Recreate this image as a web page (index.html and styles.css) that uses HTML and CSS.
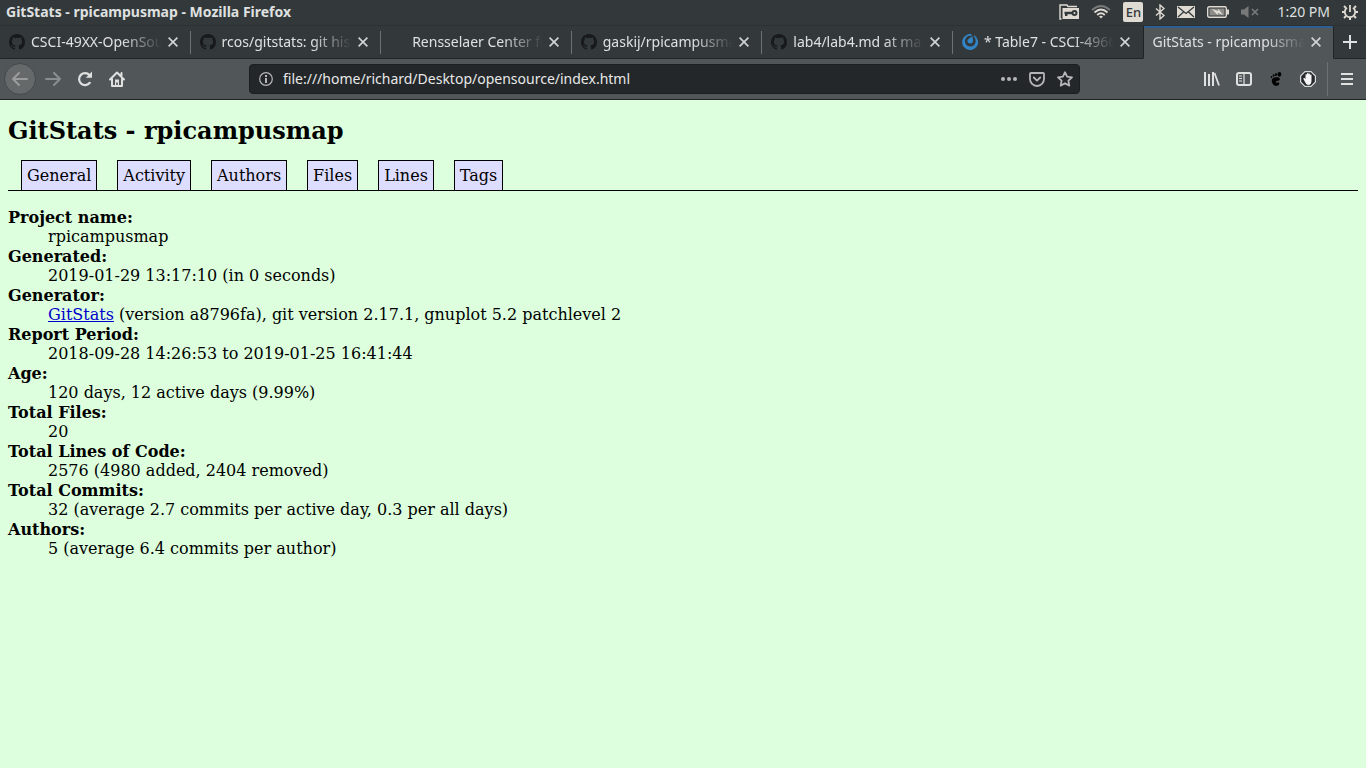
FILE: index.html
```html
<!DOCTYPE html>
<html lang="en">
<head>
<meta charset="utf-8">
<title>GitStats - rpicampusmap</title>
<link rel="stylesheet" href="styles.css">
</head>
<body>
<svg class="defs" aria-hidden="true">
  <symbol id="octocat" viewBox="0 0 16 16"><path fill="currentColor" d="M8 0C3.58 0 0 3.58 0 8c0 3.54 2.29 6.53 5.47 7.59.4.07.55-.17.55-.38 0-.19-.01-.82-.01-1.49-2.01.37-2.53-.49-2.69-.94-.09-.23-.48-.94-.82-1.13-.28-.15-.68-.52-.01-.53.63-.01 1.08.58 1.23.82.72 1.21 1.87.87 2.33.66.07-.52.28-.87.51-1.07-1.78-.2-3.64-.89-3.64-3.95 0-.87.31-1.59.82-2.15-.08-.2-.36-1.02.08-2.12 0 0 .67-.21 2.2.82.64-.18 1.32-.27 2-.27s1.36.09 2 .27c1.53-1.04 2.2-.82 2.2-.82.44 1.1.16 1.92.08 2.12.51.56.82 1.27.82 2.15 0 3.07-1.87 3.75-3.65 3.95.29.25.54.73.54 1.48 0 1.07-.01 1.93-.01 2.2 0 .21.15.46.55.38A8.01 8.01 0 0 0 16 8c0-4.42-3.58-8-8-8z"/></symbol>
  <symbol id="cross" viewBox="0 0 10 10"><path fill="none" stroke="currentColor" stroke-width="1.6" d="M.6.6l8.8 8.8M9.4.6L.6 9.4"/></symbol>
</svg>

<header class="browser">
  <div class="titlebar">
    <span class="window-title">GitStats - rpicampusmap - Mozilla Firefox</span>
    <div class="indicators">
      <svg width="20" height="16" viewBox="0 0 20 16"><path fill="none" stroke="#dfdbd2" stroke-width="1.4" d="M2.5 15H1V1h7l1 1.500h9"/><path fill="#dfdbd2" d="M3.500 4H20v11H3.500z"/><path fill="none" stroke="#33383a" stroke-width="2.400" d="M5.500 9h8M7.200 9v3"/><circle cx="15.500" cy="9" r="2" fill="none" stroke="#33383a" stroke-width="2"/></svg>
      <svg width="20" height="14" viewBox="0 0 20 14"><g fill="none" stroke-width="1.800"><path stroke="#777a79" d="M1 5q9-8 18 0"/><path stroke="#dfdbd2" d="M3.500 7.500q6.500-6 13 0M6.200 10q3.800-3.500 7.600 0"/></g><path fill="#dfdbd2" d="M8 11.500q2-1.500 4 0l-2 2z"/></svg>
      <span class="keyboard">En</span>
      <svg width="10" height="16" viewBox="0 0 10 16"><path fill="none" stroke="#dfdbd2" stroke-width="1.400" d="M1 4.500l8 7L5 15V1l4 3.500-8 7"/></svg>
      <svg width="18" height="12" viewBox="0 0 18 12"><path fill="#dfdbd2" d="M0 0h18v12H0z"/><path fill="none" stroke="#33383a" stroke-width="1.300" d="M1 1l8 6.500L17 1M1 11l5.500-5M17 11l-5.500-5"/></svg>
      <svg width="22" height="12" viewBox="0 0 22 12"><rect x=".7" y=".7" width="18.600" height="10.600" rx="1.500" fill="none" stroke="#dfdbd2" stroke-width="1.400"/><path fill="#8d8c88" d="M2.500 2.500h15v7h-15z"/><path fill="#dfdbd2" d="M20 3.500h2v5h-2zM5 3l6 2 .5-2L16 9l-5-2-.5 2z"/></svg>
      <svg width="18" height="12" viewBox="0 0 18 12"><path fill="#777a79" d="M0 3.500h3L7.500 0v12L3 8.500H0z"/><path stroke="#777a79" stroke-width="1.700" d="M11 3l6 6M17 3l-6 6"/></svg>
      <time class="clock">1:20 PM</time>
      <svg width="16" height="16" viewBox="0 0 16 16"><g fill="none" stroke="#dfdbd2"><path stroke-width="1.800" d="M5 3.800a5.200 5.200 0 1 0 6 0M8 1v7"/><path stroke-width="2" d="M3.700 3.700L2 2M12.300 3.700L14 2M2.800 8H0M13.200 8H16M4 12l-2 2M12 12l2 2M8 13.200V16"/></g></svg>
    </div>
  </div>

  <nav class="tabstrip" aria-label="Browser tabs">
    <div class="tab"><svg class="favicon"><use href="#octocat"/></svg><span class="tab-label">CSCI-49XX-OpenSource</span><button class="close" aria-label="Close tab"><svg><use href="#cross"/></svg></button></div>
    <div class="tab"><svg class="favicon"><use href="#octocat"/></svg><span class="tab-label">rcos/gitstats: git history</span><button class="close" aria-label="Close tab"><svg><use href="#cross"/></svg></button></div>
    <div class="tab"><span class="favicon"></span><span class="tab-label">Rensselaer Center for</span><button class="close" aria-label="Close tab"><svg><use href="#cross"/></svg></button></div>
    <div class="tab"><svg class="favicon"><use href="#octocat"/></svg><span class="tab-label">gaskij/rpicampusmap</span><button class="close" aria-label="Close tab"><svg><use href="#cross"/></svg></button></div>
    <div class="tab"><svg class="favicon"><use href="#octocat"/></svg><span class="tab-label">lab4/lab4.md at master</span><button class="close" aria-label="Close tab"><svg><use href="#cross"/></svg></button></div>
    <div class="tab"><svg class="favicon" viewBox="0 0 16 16"><path fill="#3284c6" fill-rule="evenodd" d="M9.500 0l-.2 2A5.200 5.200 0 0 0 3 8a5.400 5.400 0 0 0 10.500.5C14 6 13.300 4 12 2.500l-.1-1.500A8 8 0 1 1 5 .7 8 8 0 0 1 9.500 0zM10.300 2c.5 2.500 1 4.200.6 5.700A2.900 2.900 0 0 1 5.300 7c.2-1.500 2.500-3 5-5z"/></svg><span class="tab-label">* Table7 - CSCI-4966</span><button class="close" aria-label="Close tab"><svg><use href="#cross"/></svg></button></div>
    <div class="tab active"><span class="tab-label">GitStats - rpicampusmap</span><button class="close" aria-label="Close tab"><svg><use href="#cross"/></svg></button></div>
    <button class="new-tab" aria-label="New tab"><svg width="14" height="14" viewBox="0 0 14 14"><path stroke="currentColor" stroke-width="2" d="M7 0v14M0 7h14"/></svg></button>
  </nav>

  <div class="toolbar">
    <div class="nav-buttons">
      <button class="back" aria-label="Back"><svg width="16" height="14" viewBox="0 0 16 14"><path fill="none" stroke="currentColor" stroke-width="2" stroke-linecap="round" stroke-linejoin="round" d="M15 7H1M7 1L1 7l6 6"/></svg></button>
      <button class="forward" aria-label="Forward"><svg width="16" height="14" viewBox="0 0 16 14"><path fill="none" stroke="currentColor" stroke-width="2" stroke-linecap="round" stroke-linejoin="round" d="M1 7h14M9 1l6 6-6 6"/></svg></button>
      <button aria-label="Reload"><svg width="16" height="16" viewBox="0 0 16 16"><path fill="none" stroke="currentColor" stroke-width="2.200" stroke-linecap="round" d="M12.800 11.800A6 6 0 1 1 12.500 4"/><path fill="currentColor" d="M15 .5v6.200H8.800z"/></svg></button>
      <button aria-label="Home"><svg width="16" height="16" viewBox="0 0 16 16"><path fill="none" stroke="currentColor" stroke-width="2" stroke-linecap="round" stroke-linejoin="round" d="M1 8.500l7-7 7 7M3 8v7h10V8M12.500 2v2.500"/><path fill="currentColor" d="M6 8.500h4V15H8.800v-3.500H7.200V15H6z"/></svg></button>
    </div>
    <div class="urlbar">
      <svg width="14" height="14" viewBox="0 0 14 14"><circle cx="7" cy="7" r="6.300" fill="none" stroke="currentColor" stroke-width="1.200"/><path fill="currentColor" d="M6 3h2v2H6zM6 6h2v5H6z"/></svg>
      <input class="url" type="text" aria-label="Address" value="file:///home/richard/Desktop/opensource/index.html">
      <button aria-label="Page actions"><svg width="16" height="4" viewBox="0 0 16 4"><g fill="currentColor"><circle cx="2" cy="2" r="2"/><circle cx="8" cy="2" r="2"/><circle cx="14" cy="2" r="2"/></g></svg></button>
      <button aria-label="Save to Pocket"><svg width="16" height="15" viewBox="0 0 16 15"><path fill="none" stroke="currentColor" stroke-width="1.800" stroke-linecap="round" stroke-linejoin="round" d="M2 1h12q1 0 1 1v5A7 7 0 0 1 1 7V2q0-1 1-1zM4.800 5.500L8 8.600l3.200-3.100"/></svg></button>
      <button aria-label="Bookmark"><svg width="16" height="16" viewBox="0 0 16 16"><path fill="none" stroke="currentColor" stroke-width="1.800" stroke-linejoin="round" d="M8 1.200l2.100 4.500 4.900.6-3.600 3.400.9 4.900L8 12.200l-4.300 2.400.9-4.900L1 6.300l4.900-.6z"/></svg></button>
    </div>
    <div class="tools">
      <button aria-label="Library"><svg width="16" height="14" viewBox="0 0 16 14"><path stroke="currentColor" stroke-width="2" d="M1 0v14M5 2v12M9 0v14"/><path stroke="currentColor" stroke-width="1.800" d="M10.500 1L15 13.500"/></svg></button>
      <button aria-label="Sidebars"><svg width="16" height="14" viewBox="0 0 16 14"><rect x="1" y="1" width="14" height="12" rx="2" fill="none" stroke="currentColor" stroke-width="2"/><path stroke="currentColor" stroke-width="1.200" d="M8 1v12M3 4h3M3 6.500h3M3 9h3"/></svg></button>
      <button class="gnome" aria-label="GNOME Shell integration"><svg width="12" height="14" viewBox="0 0 14 16"><g fill="currentColor"><ellipse cx="11" cy="2.600" rx="2.200" ry="2.700"/><ellipse cx="7" cy="2.800" rx="1.200" ry="1.800"/><ellipse cx="4.200" cy="4" rx="1" ry="1.500"/><ellipse cx="1.800" cy="5.700" rx=".9" ry="1.300"/><path d="M7.500 6C3.500 6 1 8.500 2.500 12c1 3.500 4 4.500 6.500 3.600 2.200-1 2.300-3.800.5-3.900-1 .8-2.300 1-2.800.1C6.200 10 12 10.300 11.500 8 11.200 6.500 9.500 6 7.500 6z"/></g></svg></button>
      <button aria-label="AdBlock"><svg width="16" height="16" viewBox="0 0 16 16"><path fill="#24282a" stroke="#d8d9d9" stroke-width="1.200" d="M5 .6h6L15.400 5v6L11 15.400H5L.6 11V5z"/><path fill="#f5f5f5" d="M5 11L3.200 7.500l1-.7L5.500 8V3.500l1-.5.5 1V2.200l1-.3.5 1 .3-.5 1 .2.2 1.500.6-.5.9.2V9.500q0 4.500-3.500 4.500Q6 14 5 11z"/></svg></button>
      <button class="menu" aria-label="Open menu"><svg width="12" height="12" viewBox="0 0 12 12"><path stroke="currentColor" stroke-width="2" d="M0 1h12M0 6h12M0 11h12"/></svg></button>
    </div>
  </div>
</header>

<main class="page">
  <h1>GitStats - rpicampusmap</h1>
  <nav class="sections" aria-label="Report sections">
    <a href="#general">General</a>
    <a href="#activity">Activity</a>
    <a href="#authors">Authors</a>
    <a href="#files">Files</a>
    <a href="#lines">Lines</a>
    <a href="#tags">Tags</a>
  </nav>
  <dl id="general">
    <dt>Project name:</dt><dd>rpicampusmap</dd>
    <dt>Generated:</dt><dd>2019-01-29 13:17:10 (in 0 seconds)</dd>
    <dt>Generator:</dt><dd><a href="#gitstats">GitStats</a> (version a8796fa), git version 2.17.1, gnuplot 5.2 patchlevel 2</dd>
    <dt>Report Period:</dt><dd>2018-09-28 14:26:53 to 2019-01-25 16:41:44</dd>
    <dt>Age:</dt><dd>120 days, 12 active days (9.99%)</dd>
    <dt>Total Files:</dt><dd>20</dd>
    <dt>Total Lines of Code:</dt><dd>2576 (4980 added, 2404 removed)</dd>
    <dt>Total Commits:</dt><dd>32 (average 2.7 commits per active day, 0.3 per all days)</dd>
    <dt>Authors:</dt><dd>5 (average 6.4 commits per author)</dd>
  </dl>
</main>
</body>
</html>
```
FILE: styles.css
```css
* { box-sizing: border-box; }
html { background: #dfd; }
body { margin: 0; }
svg { display: block; flex: none; }
button {
  display: flex;
  align-items: center;
  justify-content: center;
  padding: 0;
  border: 0;
  background: none;
  color: inherit;
}
.defs { position: absolute; width: 0; height: 0; }

.browser {
  font: 14px/20px "Noto Sans", "Open Sans", sans-serif;
  color: #dfe0e0;
  background: #33383a;
  border-bottom: 1px solid #1f2426;
}
.titlebar {
  display: flex;
  align-items: center;
  justify-content: space-between;
  height: 26px;
  padding: 0 8px 2px 6px;
  border-bottom: 1px solid #2c3133;
}
.window-title { font-weight: 700; }
.indicators { display: flex; align-items: center; gap: 12px; }
.keyboard {
  width: 20px;
  border-radius: 2px;
  background: #dfdbd2;
  color: #33383a;
  font-size: 13px;
  font-weight: 500;
  text-align: center;
}
.clock { margin-left: 6px; }

.tabstrip { display: flex; height: 33px; }
.tab {
  display: flex;
  flex: 1 1 0;
  align-items: center;
  min-width: 0;
  padding: 0 13px 0 9px;
  border-bottom: 1px solid #1f2426;
  background: linear-gradient(#6d7172, #6d7172) right 5px / 1px 23px no-repeat;
}
.tab:nth-child(6) { background: none; }
.favicon { flex: none; width: 16px; height: 16px; margin-right: 6px; color: #17191b; }
.tab-label {
  flex: 1;
  overflow: hidden;
  min-width: 0;
  white-space: nowrap;
  mask-image: linear-gradient(to left, transparent, #000 40px);
}
.close { width: 10px; height: 20px; margin-left: 6px; color: #d3d4d4; }
.close svg { width: 10px; height: 10px; }
.tab.active {
  border-right: 1px solid #1f2426;
  border-left: 1px solid #1f2426;
  border-bottom-color: #515658;
  padding: 0 12px 0 8px;
  background: #515658;
  box-shadow: inset 0 2px #2f5f92;
}
.new-tab { flex: none; width: 32px; border-bottom: 1px solid #1f2426; }

.toolbar { display: flex; align-items: center; height: 40px; background: #515658; }
.nav-buttons { display: flex; align-items: center; padding-left: 4px; }
.nav-buttons button { width: 32px; height: 32px; }
.nav-buttons .back {
  margin-right: 1px;
  border: 1px solid #43484a;
  border-radius: 50%;
  background: #66696a;
  color: #9a9c9d;
}
.nav-buttons .forward { color: #8b8e8f; }
.urlbar {
  display: flex;
  flex: 1;
  align-items: center;
  gap: 12px;
  height: 30px;
  margin: 0 116px;
  padding: 0 6px 0 9px;
  border: 1px solid #1b1f21;
  border-radius: 4px;
  background: #232729;
  color: #b5b6b7;
}
.url {
  flex: 1;
  min-width: 0;
  padding: 0;
  border: 0;
  outline: 0;
  margin-left: -2px;
  background: none;
  color: #e8e8e8;
  font: inherit;
}
.tools { display: flex; align-items: center; }
.tools button { width: 32px; height: 34px; }
.tools .gnome { color: #000; }
.tools .menu { width: 39px; margin-left: 3px; border-left: 1px solid #6e7273; }

.page {
  padding: 17px 8px;
  color: #000;
  font: 16px/19px "DejaVu Serif", serif;
}
h1 { margin: 0 0 15px; font-size: 24px; line-height: 28px; }
.sections {
  display: flex;
  gap: 20px;
  padding-left: 13px;
  border-bottom: 1px solid #000;
}
.sections a {
  padding: 5px;
  border: 1px solid #000;
  border-bottom: 0;
  background: #ddf;
  color: #000;
  text-decoration: none;
}
dl { margin: 17px 0 16px; }
dt { font-weight: 700; }
dd { margin: 0 0 0 40px; line-height: 20px; }
dd a { color: #00c; }
```
